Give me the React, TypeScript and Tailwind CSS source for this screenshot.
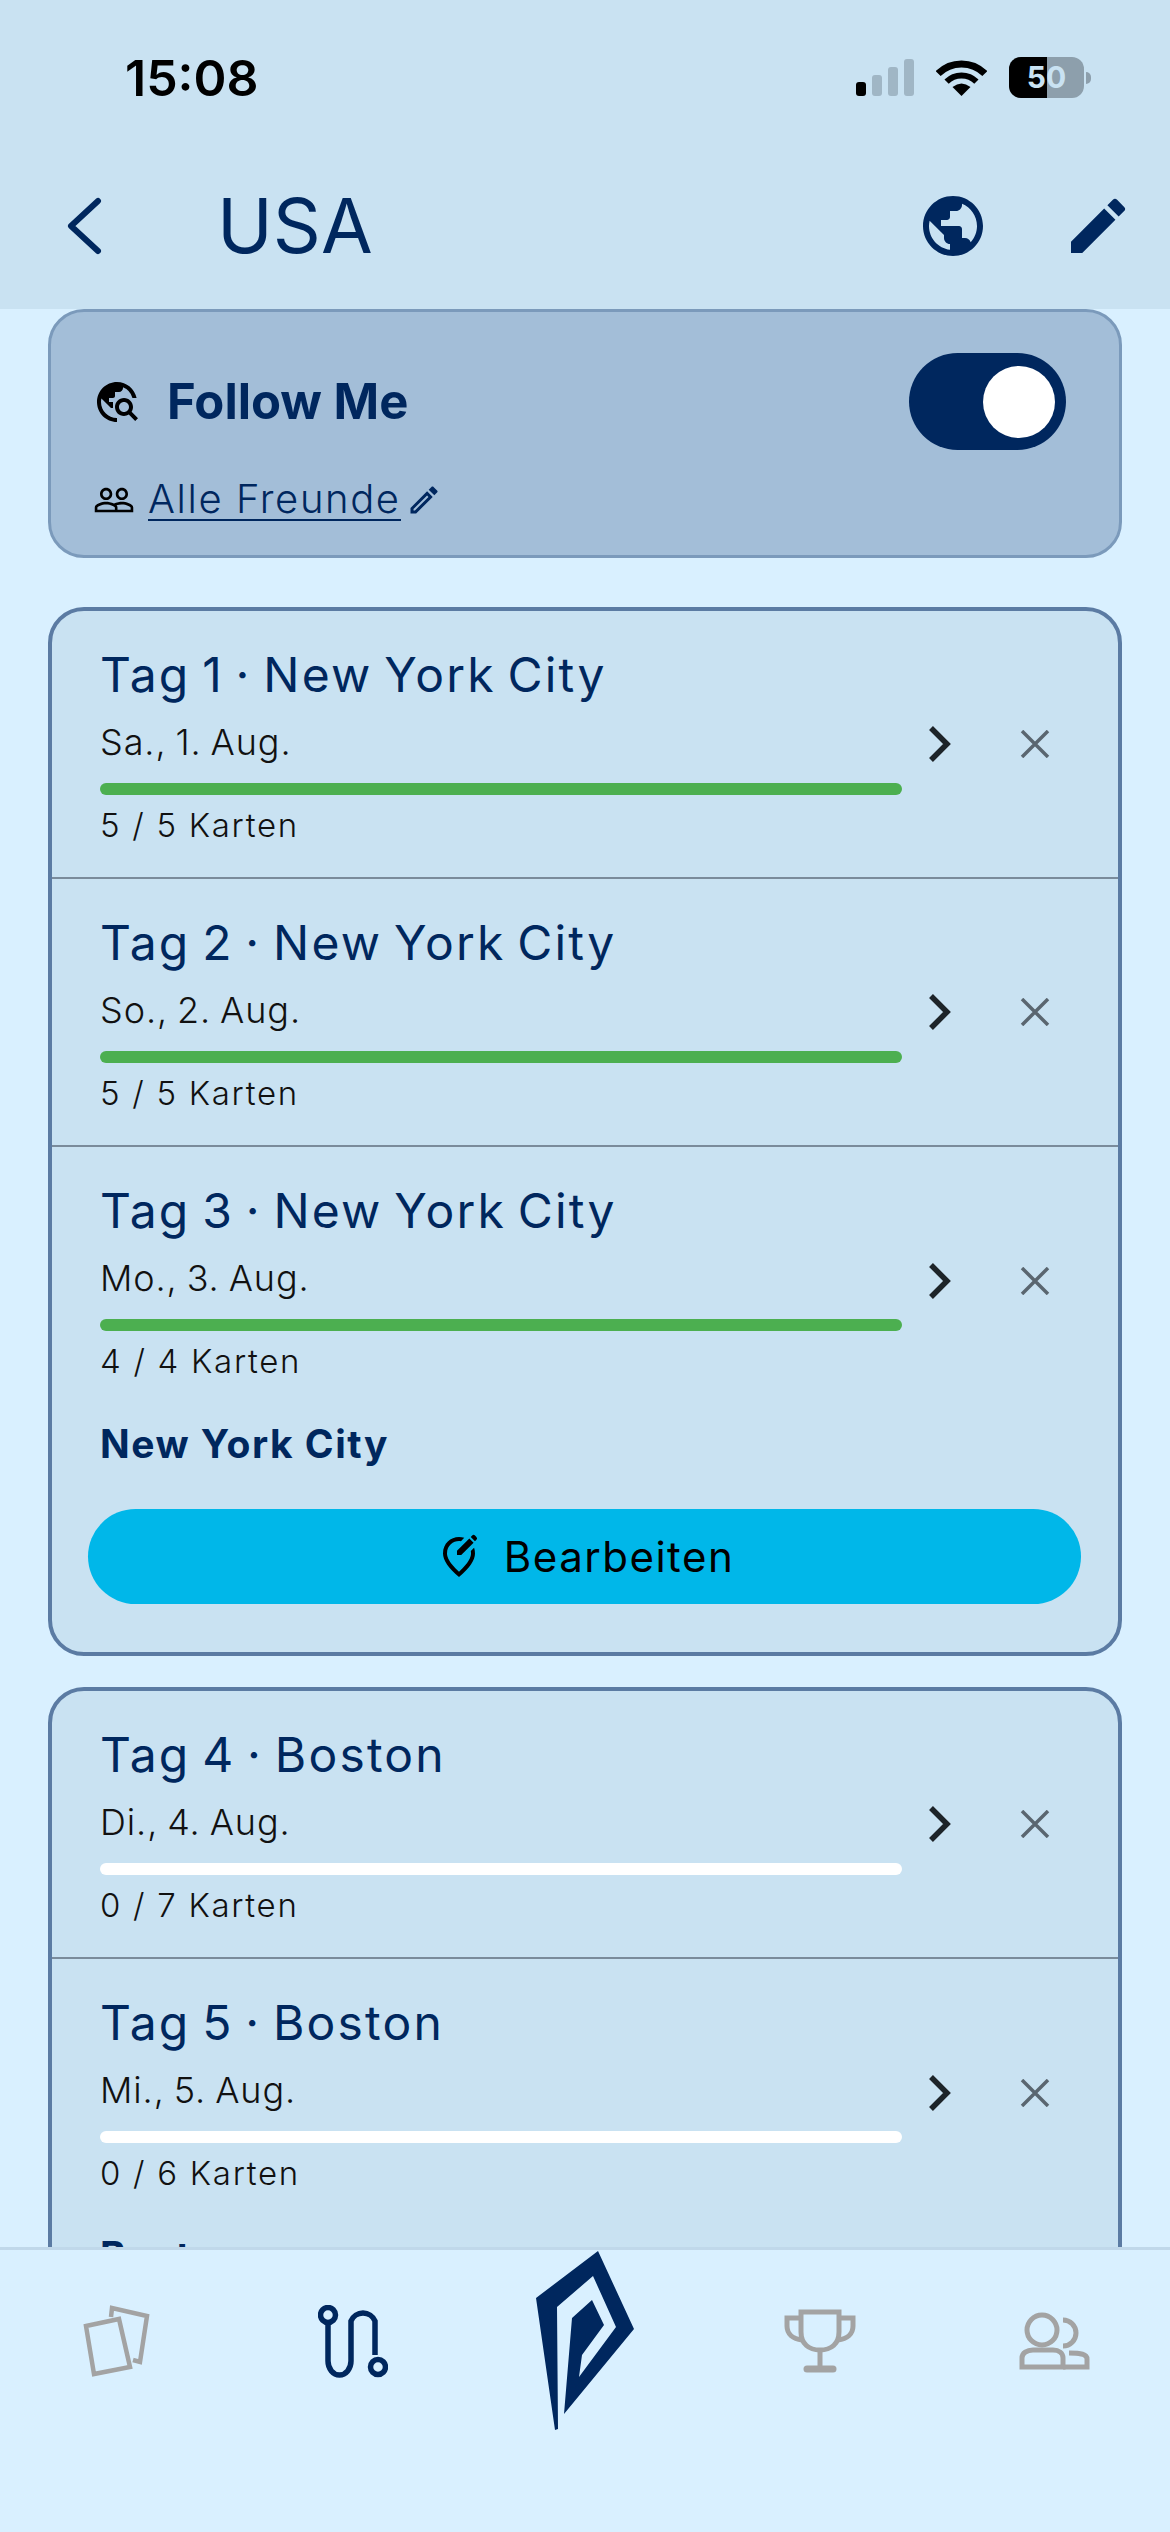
import { MdEdit, MdOutlineEdit, MdOutlineEditLocationAlt, MdPeopleOutline, MdPublic, MdTravelExplore } from 'react-icons/md'

const inter = 'font-["Inter",sans-serif]'

const groups = [
  {
    city: 'New York City',
    days: [
      { title: 'Tag 1 · New York City', date: 'Sa., 1. Aug.', cards: '5 / 5 Karten', done: true },
      { title: 'Tag 2 · New York City', date: 'So., 2. Aug.', cards: '5 / 5 Karten', done: true },
      { title: 'Tag 3 · New York City', date: 'Mo., 3. Aug.', cards: '4 / 4 Karten', done: true },
    ],
  },
  {
    city: 'Boston',
    days: [
      { title: 'Tag 4 · Boston', date: 'Di., 4. Aug.', cards: '0 / 7 Karten', done: false },
      { title: 'Tag 5 · Boston', date: 'Mi., 5. Aug.', cards: '0 / 6 Karten', done: false },
    ],
  },
]

const StatusBar = () => (
  <div className="flex h-[157px] items-start justify-between pl-[125px] pr-[79px] pt-[50px]">
    <span className={`${inter} text-[50px] leading-[56px] font-semibold text-black`}>15:08</span>
    <div className="mt-[7px] flex items-center">
      <div className="flex h-[37px] items-end gap-[6px]">
        <div className="h-[14px] w-[10px] rounded-[3px] bg-black" />
        <div className="h-[21px] w-[10px] rounded-[3px] bg-[#a0b6c5]" />
        <div className="h-[29px] w-[10px] rounded-[3px] bg-[#a0b6c5]" />
        <div className="h-[37px] w-[10px] rounded-[3px] bg-[#a0b6c5]" />
      </div>
      <svg className="ml-[22px]" width="51" height="37" viewBox="0 0 51 37" fill="none">
        <path d="M2.2 14.6a33 33 0 0 1 46.6 0" stroke="#000" strokeWidth="7" />
        <path d="M10.6 22.6a21 21 0 0 1 29.8 0" stroke="#000" strokeWidth="6" />
        <path d="M25.5 37 L16.5 28 Q25.5 21 34.5 28 Z" fill="#000" />
      </svg>
      <div className="ml-[22px] flex items-center">
        <div className="relative flex h-[41px] w-[75px] overflow-hidden rounded-[12px] bg-[#8d9fac]">
          <div className="h-full w-[38px] bg-black" />
          <span className={`absolute inset-0 text-center ${inter} text-[30px] leading-[41px] font-bold text-[#c9e2f2]`}>50</span>
        </div>
        <div className="ml-[2px] h-[12px] w-[5px] rounded-r-full bg-[#8d9fac]" />
      </div>
    </div>
  </div>
)

const Header = () => (
  <div className="h-[309px] shrink-0 bg-[#c9e2f2]">
    <StatusBar />
    <div className="flex h-[138px] items-center pl-[65px] pr-[36px]">
      <svg width="38" height="58" viewBox="0 0 38 58" fill="none">
        <path d="M33 4 L6 29 L33 54" stroke="#00275e" strokeWidth="6" strokeLinecap="round" strokeLinejoin="round" />
      </svg>
      <h1 className={`ml-[114px] flex-1 ${inter} text-[75px] leading-[80px] font-normal text-[#00275e]`}>USA</h1>
      <MdPublic className="text-[72px] text-[#00275e]" />
      <MdEdit className="ml-[73px] text-[72px] text-[#00275e]" />
    </div>
  </div>
)

const FollowCard = () => (
  <div className="flex h-[249px] rounded-[36px] border-[3px] border-[#7b9abb] bg-[#a3bed8] pl-[42px] pr-[53px]">
    <div className="flex flex-1 flex-col pt-[63px]">
      <div className="flex h-[54px] items-center">
        <MdTravelExplore className="text-[48px] text-black" />
        <span className={`ml-[26px] ${inter} text-[49px] leading-[54px] font-bold text-[#00275e]`}>Follow Me</span>
      </div>
      <div className="mt-[48px] flex h-[46px] items-center">
        <MdPeopleOutline className="text-[42px] text-black" />
        <span className={`ml-[13px] border-b-2 border-[#00275e] ${inter} text-[40px] leading-[40px] font-light tracking-[1.6px] text-[#00275e]`}>Alle Freunde</span>
        <MdOutlineEdit className="ml-[5px] text-[36px] text-[#00275e]" />
      </div>
    </div>
    <div className="mt-[41px] flex h-[97px] w-[157px] items-center justify-end rounded-full bg-[#00275e] pr-[11px]">
      <div className="h-[72px] w-[72px] rounded-full bg-white" />
    </div>
  </div>
)

const DayRow = ({ day, last }: { day: (typeof groups)[0]['days'][0]; last: boolean }) => (
  <div className={`flex h-[268px] items-center pl-[48px] ${last ? '' : 'border-b-2 border-[#7a8b9b]'}`}>
    <div className="w-[802px] self-start pt-[34px]">
      <div className={`${inter} text-[48px] leading-[60px] font-normal tracking-[2.2px] [word-spacing:-4px] text-[#00275e]`}>{day.title}</div>
      <div className={`mt-[13px] ${inter} text-[36px] leading-[48px] font-light tracking-[0.9px] [word-spacing:-2px] text-[#111]`}>{day.date}</div>
      <div className={`mt-[17px] h-[12px] rounded-full ${day.done ? 'bg-[#4caf50]' : 'bg-white'}`} />
      <div className={`mt-[8px] ${inter} text-[33px] leading-[44px] font-light tracking-[1.7px] text-[#111]`}>{day.cards}</div>
    </div>
    <svg className="ml-[26px]" width="24" height="38" viewBox="0 0 24 38" fill="none">
      <path d="M3 3 L19 19 L3 35" stroke="#1d2429" strokeWidth="5.5" />
    </svg>
    <svg className="ml-[68px]" width="30" height="28" viewBox="0 0 30 28" fill="none">
      <path d="M2 1 L28 27 M28 1 L2 27" stroke="#5a6670" strokeWidth="3.5" />
    </svg>
  </div>
)

const TripCard = ({ group }: { group: (typeof groups)[0] }) => (
  <div className="rounded-[36px] border-4 border-[#5b7ba3] bg-[#c9e2f2]">
    {group.days.map((day, i) => (
      <DayRow key={day.title} day={day} last={i === group.days.length - 1} />
    ))}
    <div className={`mt-[6px] pl-[48px] ${inter} text-[39px] leading-[46px] font-bold tracking-[1.5px] text-[#00275e]`}>{group.city}</div>
    <div className="mt-[42px] mb-[48px] ml-[36px] flex h-[95px] w-[993px] items-center justify-center rounded-full bg-[#00b7e9]">
      <MdOutlineEditLocationAlt className="text-[48px] text-black" />
      <span className={`ml-[21px] ${inter} text-[42px] leading-[50px] font-normal tracking-[1.5px] text-black`}>Bearbeiten</span>
    </div>
  </div>
)

const TabBar = () => (
  <div className="relative z-10 flex h-[285px] shrink-0 items-start border-t-[3px] border-[#c0d8ea] bg-[#d9f0ff]">
    <svg className="ml-[83px] mt-[55px]" width="70" height="72" viewBox="0 0 70 72" fill="none" stroke="#a3a3a3" strokeWidth="4.5">
      <path d="M3 21 L36 14 L47 62 L11 69 Z" />
      <path d="M28 12 L29 3 L64 11 L57 57 L50 55" />
    </svg>
    <svg className="ml-[165px] mt-[55px]" width="70" height="74" viewBox="0 0 70 74" fill="none" stroke="#00275e" strokeWidth="5.5">
      <circle cx="10" cy="10" r="7.5" />
      <path d="M10 17.5 V56 a11.5 14 0 0 0 23 0 V16 a13 13 0 0 1 24 0 V50" />
      <circle cx="60" cy="62" r="7.5" />
    </svg>
    <svg className="ml-[148px] mt-0" width="100" height="182" viewBox="0 0 100 182" fill="#00275e">
      <path d="M37 0 L73 78 L3 163 L11 67 L31 49 L43 74 L21 104 L18 126 L55 76 L32 25 L-4 56 L-3 178 L-6 179 L-25 47 Z" transform="translate(25 1)" />
    </svg>
    <svg className="ml-[148px] mt-[58px]" width="72" height="66" viewBox="0 0 72 66" fill="none" stroke="#a3a3a3" strokeWidth="5">
      <path d="M17 4 H55 V24 C55 36 47 42 36 42 C25 42 17 36 17 24 Z" />
      <path d="M17 10 H3 V18 C3 26 9 31 18 32 M55 10 H69 V18 C69 26 63 31 54 32" />
      <path d="M36 42 V60" />
      <path d="M23 61 H49" strokeWidth="7" strokeLinecap="round" />
    </svg>
    <svg className="ml-[163px] mt-[62px]" width="72" height="64" viewBox="0 0 72 64" fill="none" stroke="#a3a3a3" strokeWidth="5">
      <circle cx="23" cy="18" r="15" />
      <path d="M44 8 a13 13 0 1 1 0 26" />
      <path d="M3 55 V46 C3 41 8 38 14 38 H34 C40 38 44 41 44 46 V55 Z" />
      <path d="M44 55 H68 V47 C68 42 62 41 50 41" />
    </svg>
  </div>
)

const App = () => {
  return (
    <div className="flex h-[2532px] w-[1170px] flex-col overflow-hidden bg-[#d9f0ff]">
      <Header />
      <div className="min-h-0 flex-1 overflow-hidden px-[48px]">
        <FollowCard />
        <div className="mt-[49px] flex flex-col gap-[31px]">
          {groups.map(group => (
            <TripCard key={group.city} group={group} />
          ))}
        </div>
      </div>
      <TabBar />
    </div>
  )
}

export default App
